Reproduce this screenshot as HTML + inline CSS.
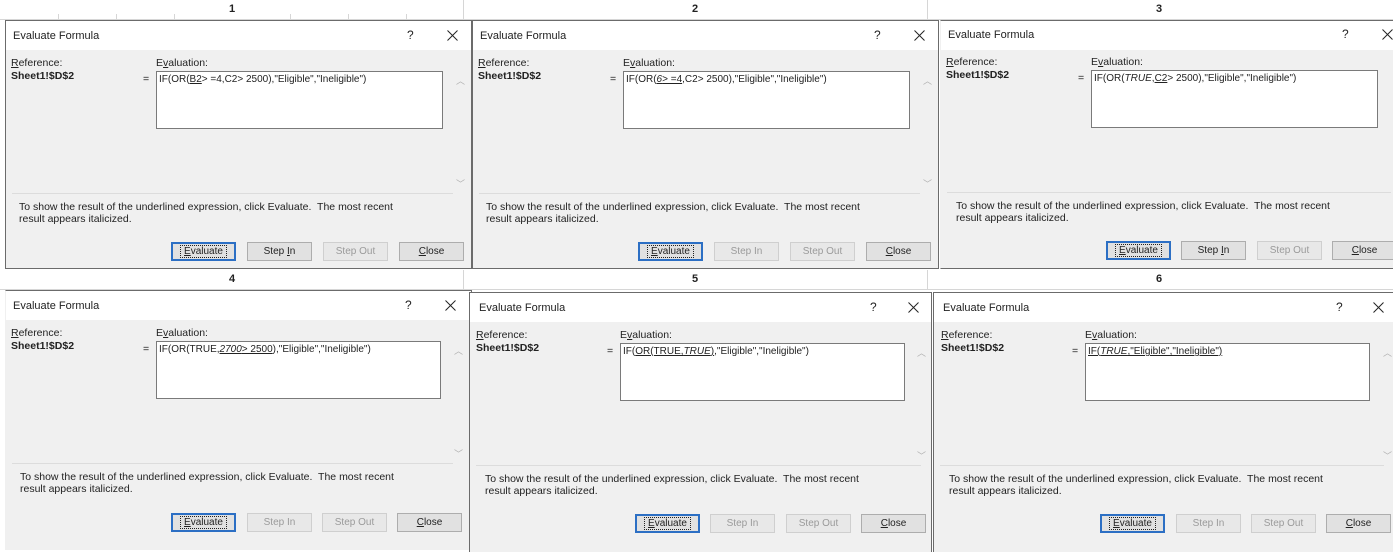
<!DOCTYPE html>
<html><head><meta charset="utf-8"><style>
*{margin:0;padding:0;box-sizing:border-box}
body{width:1393px;height:538px;overflow:hidden;background:#fff;position:relative;font-family:"Liberation Sans",sans-serif;color:#222}
.hdr{position:absolute;font-size:11px;font-weight:bold;color:#222}
.gl{position:absolute;background:#d6d6d6}
.dlg{position:absolute;width:467px;height:249px;background:#f0f0f0;border:1px solid #6b6b6b;overflow:hidden}
.tb{position:absolute;left:0;top:0;right:0;height:29px;background:#fff}
.t{position:absolute;font-size:10.5px;white-space:nowrap}
.box{position:absolute;left:150px;top:50px;width:287px;height:58px;background:#fff;border:1px solid #7a7a7a}
.box span{position:absolute;left:2px;top:2px;font-size:10px;white-space:nowrap}
.sep{position:absolute;left:6px;right:18px;top:172px;height:1px;background:#dcdcdc}
.btn{position:absolute;top:221px;width:65px;height:19px;border:1px solid #adadad;background:#e1e1e1;font-size:10px;text-align:center;line-height:17px}
.btn.def{border:2px solid #2c6fc4;line-height:15px}
.btn.def i{font-style:normal;outline:1px dotted #222;padding:0 3px}
.dis{color:#9a9a9a;border-color:#cfcfcf;background:#e8e8e8}
.arr{position:absolute;left:450px;font-size:9px;color:#b0b0b0}
.x{position:absolute;width:11px;height:11px}
.low{height:260px;border-bottom:none}
</style></head><body>
<div class="gl" style="left:0;top:19px;width:1393px;height:1px"></div>
<div class="gl" style="left:0;top:289px;width:1393px;height:1px"></div>
<div class="gl" style="left:463px;top:0;width:1px;height:20px"></div>
<div class="gl" style="left:927px;top:0;width:1px;height:20px"></div>
<div class="gl" style="left:463px;top:270px;width:1px;height:20px"></div>
<div class="gl" style="left:927px;top:270px;width:1px;height:20px"></div>
<div class="gl" style="left:58px;top:14px;width:1px;height:6px"></div><div class="gl" style="left:116px;top:14px;width:1px;height:6px"></div><div class="gl" style="left:174px;top:14px;width:1px;height:6px"></div><div class="gl" style="left:290px;top:14px;width:1px;height:6px"></div><div class="gl" style="left:348px;top:14px;width:1px;height:6px"></div><div class="gl" style="left:406px;top:14px;width:1px;height:6px"></div>
<div class="hdr" style="left:229px;top:3px">1</div>
<div class="hdr" style="left:692px;top:3px">2</div>
<div class="hdr" style="left:1156px;top:3px">3</div>
<div class="hdr" style="left:229px;top:273px">4</div>
<div class="hdr" style="left:692px;top:273px">5</div>
<div class="hdr" style="left:1156px;top:273px">6</div>

<div class="dlg" style="left:5px;top:20px">
<div class="tb"></div><div class="t" style="left:7px;top:9px;font-size:11px">Evaluate Formula</div>
<div class="t" style="left:401px;top:7px;font-size:12px">?</div><svg class="x" style="left:441px;top:9px" viewBox="0 0 11 11"><path d="M0.5 0.5L10.5 10.5M10.5 0.5L0.5 10.5" stroke="#222" stroke-width="1"/></svg>
<div class="t" style="left:5px;top:36px"><u>R</u>eference:</div><div class="t" style="left:5px;top:49px;font-weight:bold">Sheet1!$D$2</div>
<div class="t" style="left:150px;top:36px">E<u>v</u>aluation:</div><div class="t" style="left:137px;top:52px">=</div>
<div class="box"><span>IF(OR(<u>B2</u>&gt; =4,C2&gt; 2500),"Eligible","Ineligible")</span></div>
<div class="arr" style="top:53px">︿</div><div class="arr" style="top:156px">﹀</div>
<div class="sep"></div>
<div class="t" style="left:13px;top:180px;line-height:12px">To show the result of the underlined expression, click Evaluate.&nbsp; The most recent<br>result appears italicized.</div>
<div class="btn def" style="left:165px"><i><u>E</u>valuate</i></div><div class="btn" style="left:241px">Step <u>I</u>n</div><div class="btn dis" style="left:317px">Step Out</div><div class="btn" style="left:393px"><u>C</u>lose</div>
</div>

<div class="dlg" style="left:472px;top:20px">
<div class="tb"></div><div class="t" style="left:7px;top:9px;font-size:11px">Evaluate Formula</div>
<div class="t" style="left:401px;top:7px;font-size:12px">?</div><svg class="x" style="left:441px;top:9px" viewBox="0 0 11 11"><path d="M0.5 0.5L10.5 10.5M10.5 0.5L0.5 10.5" stroke="#222" stroke-width="1"/></svg>
<div class="t" style="left:5px;top:36px"><u>R</u>eference:</div><div class="t" style="left:5px;top:49px;font-weight:bold">Sheet1!$D$2</div>
<div class="t" style="left:150px;top:36px">E<u>v</u>aluation:</div><div class="t" style="left:137px;top:52px">=</div>
<div class="box"><span>IF(OR(<u><i>6</i>&gt; =4</u>,C2&gt; 2500),"Eligible","Ineligible")</span></div>
<div class="arr" style="top:53px">︿</div><div class="arr" style="top:156px">﹀</div>
<div class="sep"></div>
<div class="t" style="left:13px;top:180px;line-height:12px">To show the result of the underlined expression, click Evaluate.&nbsp; The most recent<br>result appears italicized.</div>
<div class="btn def" style="left:165px"><i><u>E</u>valuate</i></div><div class="btn dis" style="left:241px">Step In</div><div class="btn dis" style="left:317px">Step Out</div><div class="btn" style="left:393px"><u>C</u>lose</div>
</div>

<div class="dlg" style="left:940px;top:20px;width:470px;border-left-color:#f0f0f0">
<div class="tb"></div><div class="t" style="left:7px;top:8px;font-size:11px">Evaluate Formula</div>
<div class="t" style="left:401px;top:6px;font-size:12px">?</div><svg class="x" style="left:441px;top:8px" viewBox="0 0 11 11"><path d="M0.5 0.5L10.5 10.5M10.5 0.5L0.5 10.5" stroke="#222" stroke-width="1"/></svg>
<div class="t" style="left:5px;top:35px"><u>R</u>eference:</div><div class="t" style="left:5px;top:48px;font-weight:bold">Sheet1!$D$2</div>
<div class="t" style="left:150px;top:35px">E<u>v</u>aluation:</div><div class="t" style="left:137px;top:51px">=</div>
<div class="box" style="top:49px"><span>IF(OR(<i>TRUE</i>,<u>C2</u>&gt; 2500),"Eligible","Ineligible")</span></div>
<div class="sep" style="top:171px"></div>
<div class="t" style="left:15px;top:179px;line-height:12px">To show the result of the underlined expression, click Evaluate.&nbsp; The most recent<br>result appears italicized.</div>
<div class="btn def" style="left:165px;top:220px"><i><u>E</u>valuate</i></div><div class="btn" style="left:240px;top:220px">Step <u>I</u>n</div><div class="btn dis" style="left:316px;top:220px">Step Out</div><div class="btn" style="left:391px;top:220px"><u>C</u>lose</div>
</div>

<div class="dlg low" style="left:5px;top:290px;border-left-color:#f0f0f0">
<div class="tb"></div><div class="t" style="left:7px;top:9px;font-size:11px">Evaluate Formula</div>
<div class="t" style="left:399px;top:7px;font-size:12px">?</div><svg class="x" style="left:439px;top:9px" viewBox="0 0 11 11"><path d="M0.5 0.5L10.5 10.5M10.5 0.5L0.5 10.5" stroke="#222" stroke-width="1"/></svg>
<div class="t" style="left:5px;top:36px"><u>R</u>eference:</div><div class="t" style="left:5px;top:49px;font-weight:bold">Sheet1!$D$2</div>
<div class="t" style="left:150px;top:36px">E<u>v</u>aluation:</div><div class="t" style="left:137px;top:52px">=</div>
<div class="box" style="width:285px"><span>IF(OR(TRUE,<u><i>2700</i>&gt; 2500</u>),"Eligible","Ineligible")</span></div>
<div class="arr" style="left:448px;top:53px">︿</div><div class="arr" style="left:448px;top:156px">﹀</div>
<div class="sep"></div>
<div class="t" style="left:14px;top:180px;line-height:12px">To show the result of the underlined expression, click Evaluate.&nbsp; The most recent<br>result appears italicized.</div>
<div class="btn def" style="left:165px;top:222px"><i><u>E</u>valuate</i></div><div class="btn dis" style="left:241px;top:222px">Step In</div><div class="btn dis" style="left:316px;top:222px">Step Out</div><div class="btn" style="left:391px;top:222px"><u>C</u>lose</div>
</div>

<div class="dlg low" style="left:469px;top:292px;width:463px">
<div class="tb"></div><div class="t" style="left:9px;top:9px;font-size:11px">Evaluate Formula</div>
<div class="t" style="left:400px;top:7px;font-size:12px">?</div><svg class="x" style="left:438px;top:9px" viewBox="0 0 11 11"><path d="M0.5 0.5L10.5 10.5M10.5 0.5L0.5 10.5" stroke="#222" stroke-width="1"/></svg>
<div class="t" style="left:6px;top:36px"><u>R</u>eference:</div><div class="t" style="left:6px;top:49px;font-weight:bold">Sheet1!$D$2</div>
<div class="t" style="left:150px;top:36px">E<u>v</u>aluation:</div><div class="t" style="left:137px;top:52px">=</div>
<div class="box" style="width:285px"><span>IF(<u>OR(TRUE,<i>TRUE</i>)</u>,"Eligible","Ineligible")</span></div>
<div class="arr" style="left:447px;top:53px">︿</div><div class="arr" style="left:447px;top:156px">﹀</div>
<div class="sep" style="right:10px"></div>
<div class="t" style="left:15px;top:180px;line-height:12px">To show the result of the underlined expression, click Evaluate.&nbsp; The most recent<br>result appears italicized.</div>
<div class="btn def" style="left:165px"><i><u>E</u>valuate</i></div><div class="btn dis" style="left:240px">Step In</div><div class="btn dis" style="left:316px">Step Out</div><div class="btn" style="left:391px"><u>C</u>lose</div>
</div>

<div class="dlg low" style="left:933px;top:292px;width:462px">
<div class="tb"></div><div class="t" style="left:9px;top:9px;font-size:11px">Evaluate Formula</div>
<div class="t" style="left:402px;top:7px;font-size:12px">?</div><svg class="x" style="left:439px;top:9px" viewBox="0 0 11 11"><path d="M0.5 0.5L10.5 10.5M10.5 0.5L0.5 10.5" stroke="#222" stroke-width="1"/></svg>
<div class="t" style="left:7px;top:36px"><u>R</u>eference:</div><div class="t" style="left:7px;top:49px;font-weight:bold">Sheet1!$D$2</div>
<div class="t" style="left:151px;top:36px">E<u>v</u>aluation:</div><div class="t" style="left:138px;top:52px">=</div>
<div class="box" style="left:151px;width:285px"><span><u>IF(<i>TRUE</i>,"Eligible","Ineligible")</u></span></div>
<div class="arr" style="left:449px;top:53px">︿</div><div class="arr" style="left:449px;top:156px">﹀</div>
<div class="sep" style="right:10px"></div>
<div class="t" style="left:15px;top:180px;line-height:12px">To show the result of the underlined expression, click Evaluate.&nbsp; The most recent<br>result appears italicized.</div>
<div class="btn def" style="left:166px"><i><u>E</u>valuate</i></div><div class="btn dis" style="left:242px">Step In</div><div class="btn dis" style="left:317px">Step Out</div><div class="btn" style="left:392px"><u>C</u>lose</div>
</div>
</body></html>
